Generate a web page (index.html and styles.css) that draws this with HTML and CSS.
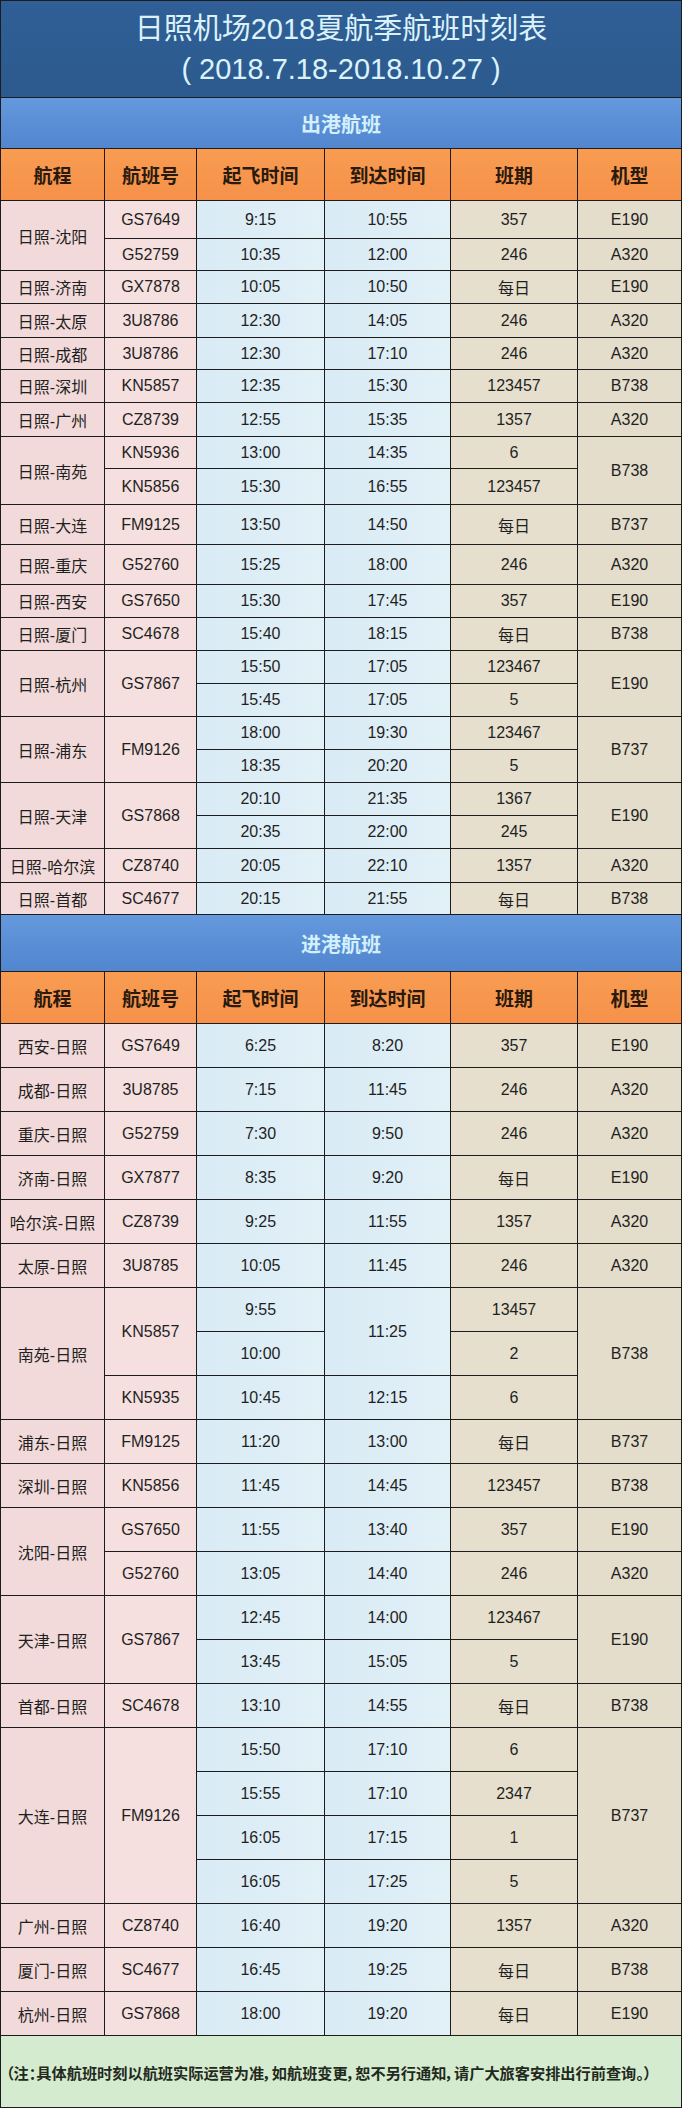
FILE: index.html
```html
<!DOCTYPE html>
<html lang="zh-CN">
<head>
<meta charset="utf-8">
<title>日照机场2018夏航季航班时刻表</title>
<link rel="stylesheet" href="styles.css">
</head>
<body>
<div class="sheet">
  <div class="title">
    <div class="title-main">日照机场2018夏航季航班时刻表</div>
    <div class="title-sub">( 2018.7.18-2018.10.27 )</div>
  </div>
  <div class="band band-out">出港航班</div>
  <div class="grid grid-out">
    <div class="h">航程</div><div class="h">航班号</div><div class="h">起飞时间</div><div class="h">到达时间</div><div class="h">班期</div><div class="h">机型</div>

    <div class="c p s2">日照-沈阳</div><div class="c p2">GS7649</div><div class="c b">9:15</div><div class="c b">10:55</div><div class="c t">357</div><div class="c t2">E190</div>
    <div class="c p2">G52759</div><div class="c b">10:35</div><div class="c b">12:00</div><div class="c t">246</div><div class="c t2">A320</div>

    <div class="c p">日照-济南</div><div class="c p2">GX7878</div><div class="c b">10:05</div><div class="c b">10:50</div><div class="c t">每日</div><div class="c t2">E190</div>
    <div class="c p">日照-太原</div><div class="c p2">3U8786</div><div class="c b">12:30</div><div class="c b">14:05</div><div class="c t">246</div><div class="c t2">A320</div>
    <div class="c p">日照-成都</div><div class="c p2">3U8786</div><div class="c b">12:30</div><div class="c b">17:10</div><div class="c t">246</div><div class="c t2">A320</div>
    <div class="c p">日照-深圳</div><div class="c p2">KN5857</div><div class="c b">12:35</div><div class="c b">15:30</div><div class="c t">123457</div><div class="c t2">B738</div>
    <div class="c p">日照-广州</div><div class="c p2">CZ8739</div><div class="c b">12:55</div><div class="c b">15:35</div><div class="c t">1357</div><div class="c t2">A320</div>

    <div class="c p s2">日照-南苑</div><div class="c p2">KN5936</div><div class="c b">13:00</div><div class="c b">14:35</div><div class="c t">6</div><div class="c t2 s2">B738</div>
    <div class="c p2">KN5856</div><div class="c b">15:30</div><div class="c b">16:55</div><div class="c t">123457</div>

    <div class="c p">日照-大连</div><div class="c p2">FM9125</div><div class="c b">13:50</div><div class="c b">14:50</div><div class="c t">每日</div><div class="c t2">B737</div>
    <div class="c p">日照-重庆</div><div class="c p2">G52760</div><div class="c b">15:25</div><div class="c b">18:00</div><div class="c t">246</div><div class="c t2">A320</div>
    <div class="c p">日照-西安</div><div class="c p2">GS7650</div><div class="c b">15:30</div><div class="c b">17:45</div><div class="c t">357</div><div class="c t2">E190</div>
    <div class="c p">日照-厦门</div><div class="c p2">SC4678</div><div class="c b">15:40</div><div class="c b">18:15</div><div class="c t">每日</div><div class="c t2">B738</div>

    <div class="c p s2">日照-杭州</div><div class="c p2 s2">GS7867</div><div class="c b">15:50</div><div class="c b">17:05</div><div class="c t">123467</div><div class="c t2 s2">E190</div>
    <div class="c b">15:45</div><div class="c b">17:05</div><div class="c t">5</div>

    <div class="c p s2">日照-浦东</div><div class="c p2 s2">FM9126</div><div class="c b">18:00</div><div class="c b">19:30</div><div class="c t">123467</div><div class="c t2 s2">B737</div>
    <div class="c b">18:35</div><div class="c b">20:20</div><div class="c t">5</div>

    <div class="c p s2">日照-天津</div><div class="c p2 s2">GS7868</div><div class="c b">20:10</div><div class="c b">21:35</div><div class="c t">1367</div><div class="c t2 s2">E190</div>
    <div class="c b">20:35</div><div class="c b">22:00</div><div class="c t">245</div>

    <div class="c p">日照-哈尔滨</div><div class="c p2">CZ8740</div><div class="c b">20:05</div><div class="c b">22:10</div><div class="c t">1357</div><div class="c t2">A320</div>
    <div class="c p">日照-首都</div><div class="c p2">SC4677</div><div class="c b">20:15</div><div class="c b">21:55</div><div class="c t">每日</div><div class="c t2">B738</div>
  </div>

  <div class="band band-in">进港航班</div>
  <div class="grid grid-in">
    <div class="h">航程</div><div class="h">航班号</div><div class="h">起飞时间</div><div class="h">到达时间</div><div class="h">班期</div><div class="h">机型</div>

    <div class="c p">西安-日照</div><div class="c p2">GS7649</div><div class="c b">6:25</div><div class="c b">8:20</div><div class="c t">357</div><div class="c t2">E190</div>
    <div class="c p">成都-日照</div><div class="c p2">3U8785</div><div class="c b">7:15</div><div class="c b">11:45</div><div class="c t">246</div><div class="c t2">A320</div>
    <div class="c p">重庆-日照</div><div class="c p2">G52759</div><div class="c b">7:30</div><div class="c b">9:50</div><div class="c t">246</div><div class="c t2">A320</div>
    <div class="c p">济南-日照</div><div class="c p2">GX7877</div><div class="c b">8:35</div><div class="c b">9:20</div><div class="c t">每日</div><div class="c t2">E190</div>
    <div class="c p">哈尔滨-日照</div><div class="c p2">CZ8739</div><div class="c b">9:25</div><div class="c b">11:55</div><div class="c t">1357</div><div class="c t2">A320</div>
    <div class="c p">太原-日照</div><div class="c p2">3U8785</div><div class="c b">10:05</div><div class="c b">11:45</div><div class="c t">246</div><div class="c t2">A320</div>

    <div class="c p s3">南苑-日照</div><div class="c p2 s2">KN5857</div><div class="c b">9:55</div><div class="c b s2">11:25</div><div class="c t">13457</div><div class="c t2 s3">B738</div>
    <div class="c b">10:00</div><div class="c t">2</div>
    <div class="c p2">KN5935</div><div class="c b">10:45</div><div class="c b">12:15</div><div class="c t">6</div>

    <div class="c p">浦东-日照</div><div class="c p2">FM9125</div><div class="c b">11:20</div><div class="c b">13:00</div><div class="c t">每日</div><div class="c t2">B737</div>
    <div class="c p">深圳-日照</div><div class="c p2">KN5856</div><div class="c b">11:45</div><div class="c b">14:45</div><div class="c t">123457</div><div class="c t2">B738</div>

    <div class="c p s2">沈阳-日照</div><div class="c p2">GS7650</div><div class="c b">11:55</div><div class="c b">13:40</div><div class="c t">357</div><div class="c t2">E190</div>
    <div class="c p2">G52760</div><div class="c b">13:05</div><div class="c b">14:40</div><div class="c t">246</div><div class="c t2">A320</div>

    <div class="c p s2">天津-日照</div><div class="c p2 s2">GS7867</div><div class="c b">12:45</div><div class="c b">14:00</div><div class="c t">123467</div><div class="c t2 s2">E190</div>
    <div class="c b">13:45</div><div class="c b">15:05</div><div class="c t">5</div>

    <div class="c p">首都-日照</div><div class="c p2">SC4678</div><div class="c b">13:10</div><div class="c b">14:55</div><div class="c t">每日</div><div class="c t2">B738</div>

    <div class="c p s4">大连-日照</div><div class="c p2 s4">FM9126</div><div class="c b">15:50</div><div class="c b">17:10</div><div class="c t">6</div><div class="c t2 s4">B737</div>
    <div class="c b">15:55</div><div class="c b">17:10</div><div class="c t">2347</div>
    <div class="c b">16:05</div><div class="c b">17:15</div><div class="c t">1</div>
    <div class="c b">16:05</div><div class="c b">17:25</div><div class="c t">5</div>

    <div class="c p">广州-日照</div><div class="c p2">CZ8740</div><div class="c b">16:40</div><div class="c b">19:20</div><div class="c t">1357</div><div class="c t2">A320</div>
    <div class="c p">厦门-日照</div><div class="c p2">SC4677</div><div class="c b">16:45</div><div class="c b">19:25</div><div class="c t">每日</div><div class="c t2">B738</div>
    <div class="c p">杭州-日照</div><div class="c p2">GS7868</div><div class="c b">18:00</div><div class="c b">19:20</div><div class="c t">每日</div><div class="c t2">E190</div>
  </div>

  <div class="note">（注：具体航班时刻以航班实际运营为准，如航班变更，恕不另行通知，请广大旅客安排出行前查询。）</div>
</div>
</body>
</html>
```

FILE: styles.css
```css
html, body {
  margin: 0;
  padding: 0;
  background: #1c1c1c;
}

.sheet {
  width: 682px;
  box-sizing: border-box;
  padding: 1px;
  display: flex;
  flex-direction: column;
  gap: 1px;
  background: #1c1c1c;
  font-family: "Liberation Sans", "Noto Sans CJK SC", sans-serif;
}

.title {
  height: 96px;
  box-sizing: border-box;
  padding-top: 8px;
  background: linear-gradient(180deg, #2f5f96 0%, #2c5a8e 100%);
  color: #dcf2fb;
  text-align: center;
  font-family: "Liberation Sans", "Noto Sans CJK SC", sans-serif;
  font-size: 29px;
  line-height: 40px;
}

.title-main,
.title-sub {
  height: 40px;
}

.band {
  display: flex;
  align-items: center;
  justify-content: center;
  background: linear-gradient(180deg, #6499dd 0%, #5a8fd6 50%, #5287d0 100%);
  color: #d3f0fd;
  font-family: "Noto Sans CJK SC", sans-serif;
  font-weight: 700;
  font-size: 20px;
}

.band-out { height: 50px; }
.band-in { height: 56px; }

.grid {
  display: grid;
  grid-template-columns: 103px 91px 127px 125px 126px 103px;
  gap: 1px;
  background: #1c1c1c;
}

.grid-out {
  grid-template-rows: 51px 37px 31px 32px 33px 31px 32px 33px 31px 35px 39px 39px 32px 32px 32px 32px 32px 32px 32px 32px 33px 31px;
}

.grid-in {
  grid-template-rows: 51px repeat(23, 43px);
}

.h {
  display: flex;
  align-items: center;
  justify-content: center;
  background: linear-gradient(180deg, #f89c52 0%, #f6914a 100%);
  color: #2a1a0e;
  font-family: "Noto Sans CJK SC", sans-serif;
  font-weight: 700;
  font-size: 19px;
}

.c {
  display: flex;
  align-items: center;
  justify-content: center;
  color: #1f1f1f;
  font-size: 16px;
  white-space: nowrap;
}

.p { background: #f2dada; }
.p2 { background: #f5dfdf; }
.b { background: linear-gradient(90deg, #d9ebf5 0%, #e2f0f7 100%); }
.t { background: #e6dfcd; }
.t2 { background: #e4ddcb; }

.s2 { grid-row: span 2; }
.s3 { grid-row: span 3; }
.s4 { grid-row: span 4; }

.note {
  height: 71px;
  display: flex;
  align-items: center;
  padding-left: 5px;
  background: #d5ebcf;
  color: #1f2a1c;
  font-family: "Noto Sans CJK SC", sans-serif;
  font-weight: 700;
  font-size: 15.2px;
  font-feature-settings: "palt";
  white-space: nowrap;
}
```
